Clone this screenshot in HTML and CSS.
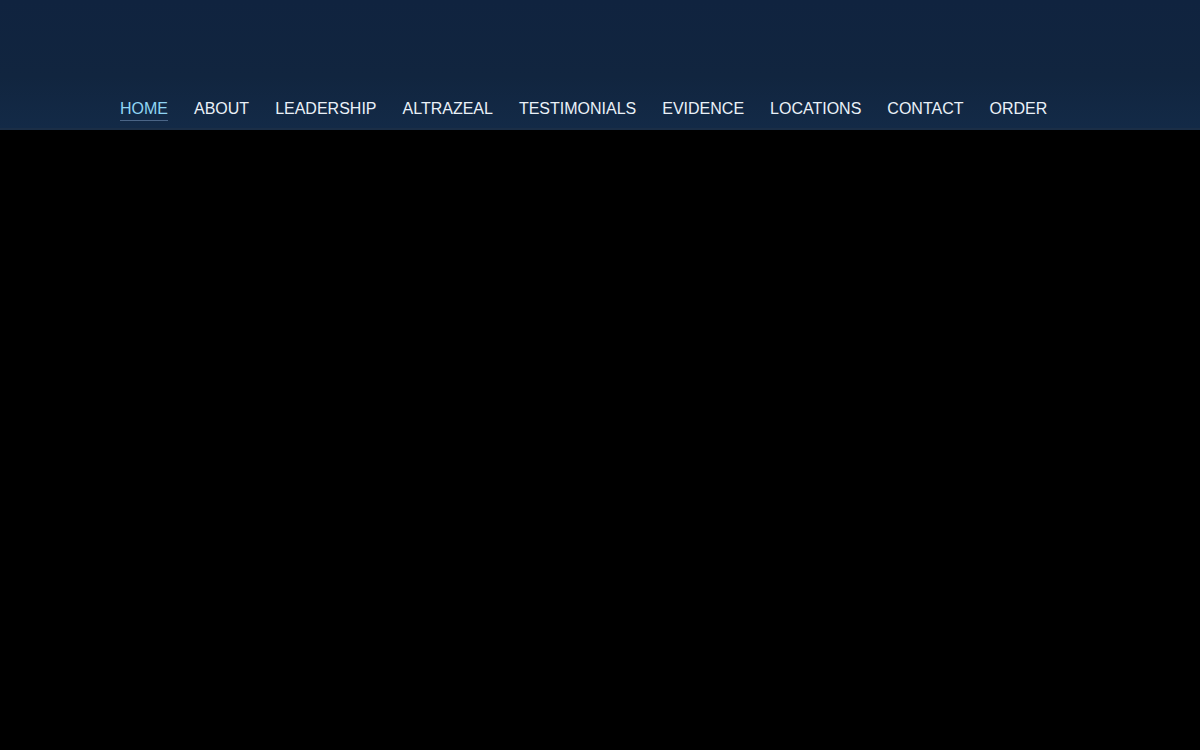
FILE: index.html
```html
<!DOCTYPE html>
<html lang="en">
<head>
<meta charset="utf-8">
<title>Home</title>
<link rel="stylesheet" href="styles.css">
</head>
<body>
<header class="site-header">
  <nav class="main-nav">
    <a class="nav-link active" href="#">HOME</a>
    <a class="nav-link" href="#">ABOUT</a>
    <a class="nav-link" href="#">LEADERSHIP</a>
    <a class="nav-link" href="#">ALTRAZEAL</a>
    <a class="nav-link" href="#">TESTIMONIALS</a>
    <a class="nav-link" href="#">EVIDENCE</a>
    <a class="nav-link" href="#">LOCATIONS</a>
    <a class="nav-link" href="#">CONTACT</a>
    <a class="nav-link" href="#">ORDER</a>
  </nav>
</header>
<main class="content"></main>
</body>
</html>
```
FILE: styles.css
```css
html, body {
  margin: 0;
  padding: 0;
  height: 100%;
  background: #000;
}
body {
  font-family: "Liberation Sans", Arial, sans-serif;
}
.site-header {
  box-sizing: border-box;
  height: 130px;
  background: linear-gradient(to bottom, #10233f 0%, #11253f 60%, #132a47 100%);
  border-bottom: 2px solid #1b2e46;
  display: flex;
  align-items: flex-end;
  padding: 0 0 7px 120px;
}
.main-nav {
  display: flex;
  gap: 26px;
}
.nav-link {
  font-size: 16px;
  line-height: 18px;
  color: #eaf1f8;
  text-decoration: none;
  padding-bottom: 2px;
  border-bottom: 1px solid transparent;
}
.nav-link.active {
  color: #8fd5f4;
  border-bottom-color: #4a6587;
}
.content {
  background: #000;
}
```
